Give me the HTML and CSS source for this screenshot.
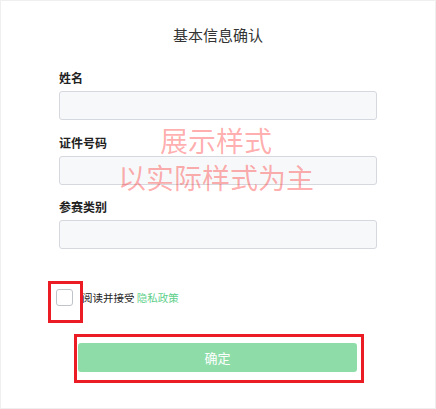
FILE: index.html
```html
<!DOCTYPE html>
<html lang="zh">
<head>
<meta charset="utf-8">
<link rel="stylesheet" href="styles.css">
</head>
<body>
<div class="page">
  <h1 class="title">基本信息确认</h1>
  <form class="form">
    <div class="field">
      <label class="label">姓名</label>
      <div class="input"></div>
    </div>
    <div class="field">
      <label class="label">证件号码</label>
      <div class="input"></div>
    </div>
    <div class="field">
      <label class="label">参赛类别</label>
      <div class="input"></div>
    </div>
    <div class="agree">
      <span class="check"></span>
      <span class="agree-text">阅读并接受 <a class="link">隐私政策</a></span>
    </div>
  </form>
  <div class="actions">
    <button class="submit" type="button">确定</button>
  </div>
  <div class="watermark">展示样式<br>以实际样式为主</div>
  <div class="mark mark-check"></div>
  <div class="mark mark-btn"></div>
</div>
</body>
</html>
```
FILE: styles.css
```css
* { box-sizing: border-box; }
html, body { margin: 0; padding: 0; background: #fff; }
body { font-family: "Noto Sans CJK SC", "Noto Sans", sans-serif; color: #333; }
.page {
  position: relative;
  width: 436px;
  height: 409px;
  border: 1px solid #efefef;
  overflow: hidden;
}
.title {
  margin: 24px 0 0;
  font-size: 15px;
  font-weight: normal;
  line-height: 20px;
  text-align: center;
  color: #333;
}
.form {
  padding: 0 58px;
  margin-top: 25px;
}
.field { display: flex; flex-direction: column; }
.field + .field { margin-top: 14.5px; }
.label {
  font-size: 12px;
  font-weight: bold;
  line-height: 16px;
  color: #222;
  margin-bottom: 5px;
}
.input {
  height: 29px;
  border: 1px solid #d5d8de;
  border-radius: 3px;
  background: #f7f8f9;
}
.agree {
  display: flex;
  align-items: center;
  margin: 40px 0 0 -3px;
  height: 17px;
}
.check {
  width: 17px;
  height: 17px;
  border: 1px solid #bfc3ca;
  border-radius: 3px;
  background: #fff;
  margin-right: 9px;
}
.agree-text { font-size: 10.5px; line-height: 17px; color: #222; }
.link { color: #5fd08b; }
.actions { padding: 0 78px 0 77px; margin-top: 37px; }
.submit {
  display: block;
  width: 100%;
  height: 29px;
  border: none;
  border-radius: 3px;
  background: #8edda8;
  color: #fff;
  font-family: inherit;
  font-size: 13px;
  padding: 0;
}
.watermark {
  position: absolute;
  left: 0;
  right: 4px;
  top: 121px;
  text-align: center;
  font-size: 28px;
  line-height: 37px;
  color: rgba(255, 0, 0, 0.32);
  pointer-events: none;
}
.mark { position: absolute; border: 3px solid #ec1c24; }
.mark-check { left: 47px; top: 280px; width: 35px; height: 42px; }
.mark-btn { left: 73px; top: 333px; width: 290px; height: 49px; }
```
